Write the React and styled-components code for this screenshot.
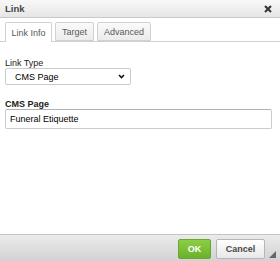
import React from 'react'
import styled, { createGlobalStyle } from 'styled-components'

const Global = createGlobalStyle`
	html, body {
		margin: 0;
		padding: 0;
		background: #fff;
	}
	body {
		font-family: "Liberation Sans", Arial, sans-serif;
		font-size: 9px;
		color: #222;
	}
`

const Dialog = styled.div`
	width: 280px;
	height: 261px;
	display: flex;
	flex-direction: column;
	background: #fff;
	overflow: hidden;
`

const TitleBar = styled.div`
	height: 17px;
	flex: none;
	display: flex;
	align-items: center;
	justify-content: space-between;
	padding: 0 8px 0 5px;
	background: linear-gradient(#f8f8f8, #e6e6e6);
	border-bottom: 1px solid #c9c9c9;
	font-weight: bold;
	font-size: 9.5px;
	color: #474747;
`

const Tabs = styled.div`
	display: flex;
	align-items: flex-end;
	gap: 3px;
	height: 24px;
	padding: 0 5px;
	border-bottom: 1px solid #d1d1d1;
	flex: none;
	box-sizing: border-box;
`

const Tab = styled.div`
	height: ${p => (p.active ? '20px' : '19px')};
	margin-bottom: ${p => (p.active ? '-1px' : '0')};
	box-sizing: border-box;
	width: ${p => p.w};
	display: flex;
	align-items: center;
	justify-content: center;
	border: 1px solid #d1d1d1;
	border-bottom: ${p => (p.active ? 'none' : '1px solid #d1d1d1')};
	border-radius: 2px 2px 0 0;
	background: ${p => (p.active ? '#fff' : 'linear-gradient(#fafafa, #ececec)')};
	color: #595959;
	font-size: 9px;
`

const Body = styled.div`
	flex: 1;
	padding: 16px 8px 0 5px;
	display: flex;
	flex-direction: column;
`

const Field = styled.div`
	display: flex;
	flex-direction: column;
	margin-bottom: ${p => p.gap || 0};
`

const Label = styled.label`
	font-size: 9px;
	font-weight: ${p => (p.bold ? 'bold' : 'normal')};
	color: #222;
	line-height: 10px;
`

const Select = styled.div`
	width: 126px;
	height: 17px;
	box-sizing: border-box;
	border: 1px solid #c9cccf;
	border-radius: 2px;
	display: flex;
	align-items: center;
	justify-content: space-between;
	padding: 0 5px 0 9px;
	font-size: 9px;
	color: #000;
	background: #fff;
`

const Input = styled.div`
	height: 20px;
	box-sizing: border-box;
	border: 1px solid #c9cccf;
	border-top-color: #aeb3b9;
	border-radius: 2px;
	display: flex;
	align-items: center;
	padding: 0 4px;
	font-size: 9px;
	color: #000;
`

const Footer = styled.div`
	height: 27px;
	flex: none;
	box-sizing: border-box;
	border-top: 1px solid #c4c4c4;
	background: linear-gradient(#ebebeb, #d2d2d2);
	display: flex;
	align-items: center;
	justify-content: flex-end;
	gap: 5px;
	padding: 0 15px 0 0;
	position: relative;
`

const Button = styled.div`
	height: 20px;
	box-sizing: border-box;
	display: flex;
	align-items: center;
	justify-content: center;
	width: ${p => p.w};
	border-radius: 2px;
	font-weight: bold;
	font-size: 9px;
	color: ${p => (p.primary ? '#fff' : '#474747')};
	background: ${p => (p.primary ? 'linear-gradient(#8ccf43, #6ab12c)' : 'linear-gradient(#fff, #e8e8e8)')};
	border: 1px solid ${p => (p.primary ? '#6aa535' : '#b6b6b6')};
	margin-top: 1px;
`

const Grip = styled.svg`
	position: absolute;
	right: 4px;
	bottom: 3px;
`

export default function App() {
	return (
		<Dialog>
			<Global />
			<TitleBar>
				<span>Link</span>
				<svg width="8" height="8" viewBox="0 0 8 8">
					<path d="M1 1 L7 7 M7 1 L1 7" stroke="#333" strokeWidth="2" />
				</svg>
			</TitleBar>
			<Tabs>
				<Tab active w="47px">Link Info</Tab>
				<Tab w="39px">Target</Tab>
				<Tab w="54px">Advanced</Tab>
			</Tabs>
			<Body>
				<Field gap="14px">
					<Label>Link Type</Label>
					<Select>
						<span>CMS Page</span>
						<svg width="7" height="5" viewBox="0 0 7 5">
							<path d="M1 1 L3.5 3.5 L6 1" stroke="#111" strokeWidth="1.6" fill="none" />
						</svg>
					</Select>
				</Field>
				<Field>
					<Label bold>CMS Page</Label>
					<Input>Funeral Etiquette</Input>
				</Field>
			</Body>
			<Footer>
				<Button primary w="33px">OK</Button>
				<Button w="49px">Cancel</Button>
				<Grip width="7" height="7" viewBox="0 0 7 7">
					<path d="M7 0 L7 7 L0 7 Z" fill="#666" />
				</Grip>
			</Footer>
		</Dialog>
	)
}
